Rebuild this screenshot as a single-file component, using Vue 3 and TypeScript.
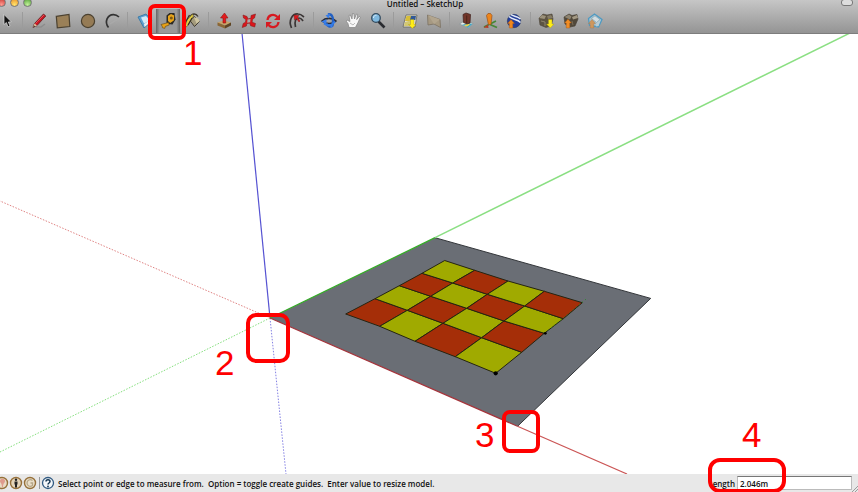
<script setup lang="ts">
import { ref } from 'vue'

interface Tool {
  name: string
  art: string
  active?: boolean
}

const groups: Tool[][] = [
  [
    { name: 'Select', art: '<path d="M9 5.500v10l2.400-2 1.600 4.300 2-.8-1.700-4 3-.2z" fill="#111" stroke="#ddd" stroke-width=".7"/>' },
  ],
  [
    { name: 'Line', art: '<path d="M9 18h5l4-3" stroke="#8d8d8d" stroke-width="1.500" fill="none"/><path d="M6 18.500l1.500-4L16.500 5l2.300 2L10 16.500z" fill="#c91420" stroke="#62201f" stroke-width=".8"/><path d="M6 18.500l1.500-4 2.500 2z" fill="#dfc6a0"/><path d="M6 18.500l1.200-2 .9.900z" fill="#222"/><path d="M8.500 14.500L17 6" stroke="#ef5660" stroke-width=".8"/>' },
    { name: 'Rectangle', art: '<path d="M5.300 7.300L18 5.500l.8 12L6.300 18.800z" fill="#9a8058" stroke="#4b4130" stroke-width="1.200"/>' },
    { name: 'Circle', art: '<circle cx="12" cy="12" r="6.600" fill="#957b55" stroke="#4b4130" stroke-width="1.200"/>' },
    { name: 'Arc', art: '<path d="M10 15l8-5" stroke="#aaa" stroke-width="1.300"/><path d="M8.500 18.500C4 13 7.500 5.500 13.500 5.600c2.500 0 4 1 5.500 2.400" fill="none" stroke="#333" stroke-width="1.700"/>' },
  ],
  [
    { name: 'Eraser', art: '<path d="M6 8l8-3 6 7-8 7z" fill="#5d9fcf" stroke="#3f7da9"/><path d="M9 8.500L14 7l4 4.500-6 3z" fill="#d5e9f6"/><path d="M12 15l6-4v2.500L12.500 18z" fill="#e9edf0"/>' },
    { name: 'Tape Measure', active: true, art: '<path d="M10.500 6.500l3-2.500h5l1 6.500-3 5-6-.7z" fill="#2b2924"/><path d="M12 7l3-2 3.300 1.500-.5 5-3.600 2.500-2.200-2z" fill="#e9a51a"/><circle cx="15.300" cy="9" r="1.500" fill="#7a5916"/><path d="M5 15.500l7.500-2 .8 2.500-4 1.400-.5 2-2.400-.7-.2-1.500z" fill="#e8a116" stroke="#5a4315" stroke-width=".6"/>' },
    { name: 'Paint Bucket', art: '<path d="M10 8c2-4 6-4 8-.5" fill="none" stroke="#403b32" stroke-width="1.500"/><path d="M9.500 11l5-3.500 5 5-5 5z" fill="#a39a7c" stroke="#403b32"/><path d="M14 8.500c3-.5 5.500 1.500 5.500 4l-3 2z" fill="#cfc6a2"/><path d="M12.500 5l1 2-6 10-3 2 2.500-8z" fill="#e2cf45" stroke="#554d29" stroke-width=".6"/><path d="M9.500 6l-4.500 8M12 9l-4 7" stroke="#332e23" stroke-width="1.200" fill="none"/>' },
  ],
  [
    { name: 'Push/Pull', art: '<path d="M5.500 13.500l6.500-2 7 2-6 3z" fill="#c7a469"/><path d="M5.500 13.500l7.500 3v3l-7.500-3z" fill="#8a6635"/><path d="M13 16.500l6-3v3l-6 3z" fill="#5d4423"/><path d="M11 14V9H8.500l4-5 3.500 5h-2.300v5z" fill="#e31b1d" stroke="#8e1515" stroke-width=".6"/>' },
    { name: 'Move', art: '<path d="M6 6l4 1.500 1 2.500 3-1V6.500L18.500 5 17.500 9l-2 1.300-.4 3 3.400 1.200-.8 3.500-4.200-1.300-.8-2.700-3 .8-.3 2.200-4.200 1.500 1-4 2.300-1.300.4-2.600L6.500 9z" fill="#dc151b" stroke="#842020" stroke-width=".6"/><path d="M10.500 10.500l3-.4-.3 3.200-3 .4z" fill="#aaa"/>' },
    { name: 'Rotate', art: '<path d="M6.500 11C7 6 13 4 16.500 8" fill="none" stroke="#d71a21" stroke-width="2.200"/><path d="M19 5v6h-6z" fill="#d71a21"/><path d="M17.500 13c-.5 5-6.500 7-10 3" fill="none" stroke="#d71a21" stroke-width="2.200"/><path d="M5 19v-6h6z" fill="#d71a21"/>' },
    { name: 'Offset', art: '<path d="M6.500 19C3 11 7.500 4.500 13 5c3 0 4 1.200 6 3M10.500 18C9 12 11 9 14 9c2 0 2.700 1.200 4 3" fill="none" stroke="#3a3535" stroke-width="1.700"/><path d="M14 13L11.500 9.500l-2 1.500-.5-5 5 .5-1.500 2 2.500 3.500z" fill="#dc151b" stroke="#861b1b" stroke-width=".5"/>' },
  ],
  [
    { name: 'Orbit', art: '<path d="M5 12c3-3 10-4 14 0-3 3-10 4-14 0z" fill="none" stroke="#292c38" stroke-width="1.600"/><path d="M11 5.500c4-1 6 3 4.500 11-2.500 2-5 1-6-2" fill="none" stroke="#2461c2" stroke-width="2.400"/><path d="M13 4.500l-1 5-3.500-3zM4.500 12.500l5-2.500v5.500zM12 16l4-1-1 4z" fill="#397eea"/><path d="M7 14.500c4 3 8 2 11-2" fill="none" stroke="#347be6" stroke-width="2"/>' },
    { name: 'Pan', art: '<path d="M8 18.500l-1-4-2-2.500 1.200-.8 2.800 1.300L8 6.500 9.300 6l1.700 4 .5-5.500h1.300L13.500 10l2-5 1.200.4-1 5.200 2.600-3.200 1 .8-2.500 5.800-2.500 4.500z" fill="#f7f7f7" stroke="#777" stroke-width=".6"/><path d="M9 14l3 2 2-2" fill="none" stroke="#bbb"/>' },
    { name: 'Zoom', art: '<path d="M12.500 12.500l6 6" stroke="#292b30" stroke-width="2.600"/><circle cx="10" cy="9" r="4.300" fill="#80b9df" stroke="#344c60" stroke-width="1.300"/><path d="M7.500 9c0-2 1.300-2.800 3-2.800" stroke="#d8effc" fill="none"/>' },
  ],
  [
    { name: 'Get Current View', art: '<path d="M8 6h11l-2 12H5z" fill="#e8e6d5" stroke="#66665e" stroke-width=".8"/><path d="M8.500 7h6l-1 5H7z" fill="#d6bd38"/><path d="M13 7h5l-.7 4H12z" fill="#315896"/><path d="M7 13l7-2-1 6H6z" fill="#d3c870"/><path d="M12.500 10.500h3.500v5h2l-3.700 4-3.800-4h2z" fill="#ffed16" stroke="#9c8b18" stroke-width=".4"/>' },
    { name: 'Toggle Terrain', art: '<path d="M5.500 6l12.500 4.500.5 8L12 15l-6 1z" fill="#a69982" stroke="#7b7162" stroke-width=".8"/><path d="M6 6l12 4.500-6 4.500z" fill="#b2a58e"/>' },
  ],
  [
    { name: 'Add Location', art: '<path d="M5.500 15l5-3 8.500 2.500-4.500 4.500z" fill="#e8eee7" stroke="#7d8d92" stroke-width=".6"/><path d="M7.500 16l3.500 1 3 2 4.500-4-4-1z" fill="#46a4c3"/><path d="M10 16.500l4-2 2 1-3 2z" fill="#ecd34d"/><path d="M9 5.500l3-1.500 4.500 1.500-.5 8.500-3 1-3.500-1.500z" fill="#713529" stroke="#3d211c" stroke-width=".7"/><path d="M12.700 6.500V14.500" stroke="#4a2419"/>' },
    { name: 'Place Model', art: '<path d="M11 15.500L6 18M12 15.500l7 3M12 15l6-3" stroke="#468737" stroke-width="1.800"/><path d="M10 15.500l-4.500 3 5 .5z" fill="#b63b22"/><path d="M8.500 6.500L10 4.500h2.500L14 6.500l-.5 4.500-.6 4.500h-2.500L9.500 11z" fill="#ed851b" stroke="#995018" stroke-width=".7"/>' },
    { name: 'Google Earth', art: '<circle cx="12" cy="12" r="6.700" fill="#243f9c" stroke="#23345f" stroke-width=".6"/><path d="M7 7.500c4 4 8 2 11.500 6M9 5.700c3 2 6 1 9.500 4.300" stroke="#e4ebf7" stroke-width="1.500" fill="none"/><path d="M5.500 14.500L9 10.500l3.500 4h-1.700v4.500H7.300v-4.500z" fill="#f1871c" stroke="#a4571c" stroke-width=".4"/>' },
  ],
  [
    { name: 'Get Models', art: '<path d="M5 9l4-4 4 1 5-1 1 5-2 7-5 1.500L6 16z" fill="#5d5443" stroke="#4b453a" stroke-width=".6"/><path d="M5 9l3-3 4 1-1.500 3z" fill="#9b917a"/><path d="M13 7l4-1 2 3-5 1z" fill="#857b65"/><path d="M7 12l4 1v4" stroke="#8e846d" fill="none"/><path d="M14.500 10.500H18V15h2l-3.700 4-3.800-4h2z" fill="#ffee18" stroke="#a29416" stroke-width=".4"/>' },
    { name: 'Share Model', art: '<path d="M5 8l5-3 3 1.500 5-1 1 4.500-3 7-5 1-5-3z" fill="#51483a" stroke="#453e34" stroke-width=".6"/><path d="M5.500 8L10 5.500l2.500 2-1.500 3z" fill="#8e8471"/><path d="M13 8l5-2 1 3-5 1.500z" fill="#a29883"/><path d="M13 12l1 4" stroke="#786d58"/><path d="M5.500 14L9 10l3.500 4h-1.700v5H7.200v-5z" fill="#f18d25" stroke="#92501b" stroke-width=".4"/>' },
    { name: 'Share Component', art: '<path d="M5.500 9.500L11.500 5l7.500 5.500-3.500 7.500-9-1.500z" fill="#a9c5d1" stroke="#4f9ac2" stroke-width="1.300"/><path d="M8.500 9.500l3.500-2.700 5 3.700-3.500 3z" fill="#d3dde0" stroke="#799ba9" stroke-width=".6"/><path d="M13.500 14l4-3-2 6-2.500.5z" fill="#b9ccd4"/><path d="M5.500 14.500L9 10.500l3.500 4h-1.700v4.500H7.200v-4.500z" fill="#cf975c" stroke="#a37548" stroke-width=".4"/>' },
  ],
]

const hint = 'Select point or edge to measure from.  Option = toggle create guides.  Enter value to resize model.'

const length = ref('2.046m')

// Corner points of the board, one list for each grid line.
const grid: [number, number][][] = [
  [[345.7, 314], [379.7, 326.3], [415, 341.3], [455.3, 356.7], [495.7, 373.3]],
  [[375, 298.7], [407.3, 310.3], [443, 323.3], [481.7, 337.7], [521.7, 352.3]],
  [[399.3, 285.7], [430.7, 296.3], [466.7, 308.3], [504, 321], [544.3, 333.3]],
  [[422, 273.3], [452.7, 283], [487.3, 294.3], [524.7, 306], [563.3, 318.7]],
  [[444.7, 260.5], [474.7, 270.3], [508, 281], [544.3, 291.3], [582.3, 302.7]],
]

const tiles = grid.slice(0, -1).flatMap((row, j) =>
  row.slice(0, -1).map((point, i) => ({
    points: [point, row[i + 1], grid[j + 1][i + 1], grid[j + 1][i]].map((p) => p.join(',')).join(' '),
    fill: (i + j) % 2 === 0 ? '#a52e08' : '#a0aa00',
  })),
)
</script>

<template>
  <main class="window">
    <header class="chrome">
      <div class="titlebar">
        <div class="lights">
          <button class="light close" aria-label="Close"></button>
          <button class="light minimise" aria-label="Minimise"></button>
          <button class="light expand" aria-label="Zoom window"></button>
        </div>
        <h1>Untitled – SketchUp</h1>
        <button class="pill" aria-label="Toggle toolbar"></button>
      </div>
      <nav class="tools" aria-label="Tools">
        <template v-for="(group, g) in groups" :key="g">
          <span v-if="g > 0" class="separator"></span>
          <button
            v-for="tool in group"
            :key="tool.name"
            class="tool"
            :class="{ active: tool.active }"
            :aria-label="tool.name"
          >
            <svg viewBox="0 0 24 24" v-html="tool.art"></svg>
          </button>
        </template>
      </nav>
    </header>

    <section class="scene">
      <svg viewBox="0 34 858 440" preserveAspectRatio="xMidYMid slice" role="img" aria-label="Model">
        <path d="M270 318L435 237.700 650.700 298.400 517.500 426.300z" fill="#6a6e75" />
        <path d="M435 237.700L650.700 298.400 517.500 426.300" fill="none" stroke="#33363a" />
        <g fill="none">
          <path d="M242 33L270 318" stroke="#5552d2" stroke-width="1.200" />
          <path d="M270 318L286 474" stroke="#8582e4" stroke-dasharray="1.500 1.500" />
          <path d="M270 318L435 237.700" stroke="#35ae27" stroke-width="1.300" />
          <path d="M435 237.700L850 33" stroke="#8bdf83" stroke-width="1.500" />
          <path d="M270 318L0 452" stroke="#84df7d" stroke-dasharray="1.500 1.500" />
          <path d="M270 318L517.500 426.300" stroke="#a6343b" stroke-width="1.200" />
          <path d="M517.500 426.300L627 474" stroke="#cb5555" stroke-width="1.200" />
          <path d="M270 318L0 201" stroke="#e08484" stroke-dasharray="1.500 1.500" />
        </g>
        <polygon
          v-for="tile in tiles"
          :key="tile.points"
          :points="tile.points"
          :fill="tile.fill"
          stroke="#252411"
          stroke-width="1"
          stroke-linejoin="round"
        />
        <path d="M545 333L588 297.500" stroke="#248c28" stroke-dasharray="1 3" />
        <circle cx="495.700" cy="373.300" r="2.100" />
        <circle cx="545.300" cy="333.300" r="1.400" />
      </svg>
    </section>

    <footer class="status">
      <div class="badges">
        <svg viewBox="0 0 14 14"><circle cx="7" cy="7" r="5.500" fill="#eadbc5" stroke="#96703a" stroke-width="1.400" /><path d="M5 5c0-3 5-3 5 0 0 2-2 2-2 6H7c0-4-2-4-2-6z" fill="#df9b8d" /></svg>
        <svg viewBox="0 0 14 14"><circle cx="7" cy="7" r="5.500" fill="#e3d4b8" stroke="#96703a" stroke-width="1.400" /><circle cx="7" cy="3.800" r="1.200" fill="#222" /><path d="M5.500 5.500h3v3H8v3H6v-3h-.5z" fill="#222" /></svg>
        <svg viewBox="0 0 14 14"><circle cx="7" cy="7" r="5.500" fill="#eadfc9" stroke="#96703a" stroke-width="1.400" /><path d="M9.500 4.500C7 2.500 4 4.300 4 7s3 4.500 5.500 2.500V7H7.500" fill="none" stroke="#b6a687" stroke-width="1.300" /></svg>
      </div>
      <span class="divider"></span>
      <svg class="help" viewBox="0 0 14 14"><circle cx="7" cy="7" r="5.500" fill="#f4f7fa" stroke="#315a82" stroke-width="1.300" /><path d="M5 5.500c0-2.500 4-2.500 4 0C9 7 7 7 7 8.500" fill="none" stroke="#173753" stroke-width="1.500" /><circle cx="7" cy="10.400" r=".9" fill="#173753" /></svg>
      <p>{{ hint }}</p>
      <label for="length">ength</label>
      <input id="length" v-model="length" type="text" />
      <svg class="grip" viewBox="0 0 6 18"><path d="M0 18l6-6M3 18l3-3" stroke="#888" stroke-width=".8" /></svg>
    </footer>

    <svg class="notes" viewBox="0 0 858 492">
      <g fill="none" stroke="#f00">
        <rect x="150" y="6" width="34" height="32" rx="5" stroke-width="4" />
        <rect x="248" y="315" width="40" height="46" rx="8" stroke-width="4" />
        <rect x="504" y="412" width="34" height="39" rx="6" stroke-width="4" />
        <rect x="710" y="460" width="74" height="31" rx="10" stroke-width="4" />
      </g>
      <text x="183" y="65">1</text>
      <text x="215" y="375">2</text>
      <text x="475" y="447">3</text>
      <text x="742" y="447">4</text>
    </svg>
  </main>
</template>

<style>
body {
  margin: 0;
  background: #fff;
}
</style>

<style scoped>
.window {
  position: relative;
  display: flex;
  flex-direction: column;
  height: 100vh;
  overflow: hidden;
  font-family: "Open Sans", "Noto Sans", sans-serif;
  font-size: 8px;
  font-weight: 600;
  color: #111;
}
button {
  padding: 0;
  border: 0;
  background: none;
}
.chrome {
  flex: none;
  background: linear-gradient(#c6c6c6, #949494);
  border-bottom: 1px solid #7d7d7d;
}
.titlebar {
  display: grid;
  grid-template-columns: 1fr auto 1fr;
  height: 9px;
}
.lights {
  display: flex;
  gap: 4px;
  margin: -2px 0 0 -3px;
}
.light {
  width: 9px;
  height: 9px;
  border: 1px solid #777;
  border-radius: 50%;
}
.close {
  background: radial-gradient(circle at 50% 80%, #ff9a91, #c8352f);
}
.minimise {
  background: radial-gradient(circle at 50% 80%, #ffe46d, #e98c22);
}
.expand {
  background: radial-gradient(circle at 50% 80%, #c2f19a, #4c9c31);
}
h1 {
  margin: 0;
  padding-right: 8px;
  font-size: inherit;
  font-weight: inherit;
  line-height: 8px;
}
.pill {
  justify-self: end;
  width: 12px;
  height: 7px;
  margin: -1px 5px 0 0;
  border: 1px solid #777;
  border-radius: 3px;
  background: #ddd;
}
.tools {
  display: flex;
  justify-content: space-between;
  max-width: 612px;
  height: 24px;
  margin-left: -5px;
}
.tool {
  width: 24px;
  height: 24px;
}
.tool.active {
  background: linear-gradient(90deg, #666, #999 15%, #999 85%, #666);
}
.tool svg {
  display: block;
  width: 24px;
  height: 24px;
}
.separator {
  width: 1px;
  margin: 3px;
  background: #9b9b9b;
}
.scene {
  flex: 1;
  min-height: 0;
  background: #fff;
}
.scene svg {
  display: block;
  width: 100%;
  height: 100%;
}
.status {
  display: flex;
  flex: none;
  align-items: center;
  height: 18px;
  background: #e8e8e8;
}
.badges {
  display: flex;
  margin-left: -5px;
}
.badges svg,
.help {
  flex: none;
  width: 14px;
  height: 14px;
}
.divider {
  width: 1px;
  height: 12px;
  margin: 0 1px 0 2px;
  background: #999;
}
.status p {
  flex: 1;
  min-width: 0;
  margin: 0 0 0 3px;
  overflow: hidden;
  white-space: pre;
}
.status input {
  box-sizing: border-box;
  width: 115px;
  height: 14px;
  margin-left: 2px;
  padding: 0 2px;
  border: 1px solid #bbb;
  border-top-color: #777;
  border-radius: 0;
  background: #fff;
  color: inherit;
  font: inherit;
}
.grip {
  width: 6px;
  height: 18px;
}
.notes {
  position: absolute;
  inset: 0;
  width: 100%;
  height: 100%;
  pointer-events: none;
}
.notes text {
  fill: #f00;
  font-family: "Liberation Sans", sans-serif;
  font-size: 35px;
  font-weight: 400;
}
</style>
